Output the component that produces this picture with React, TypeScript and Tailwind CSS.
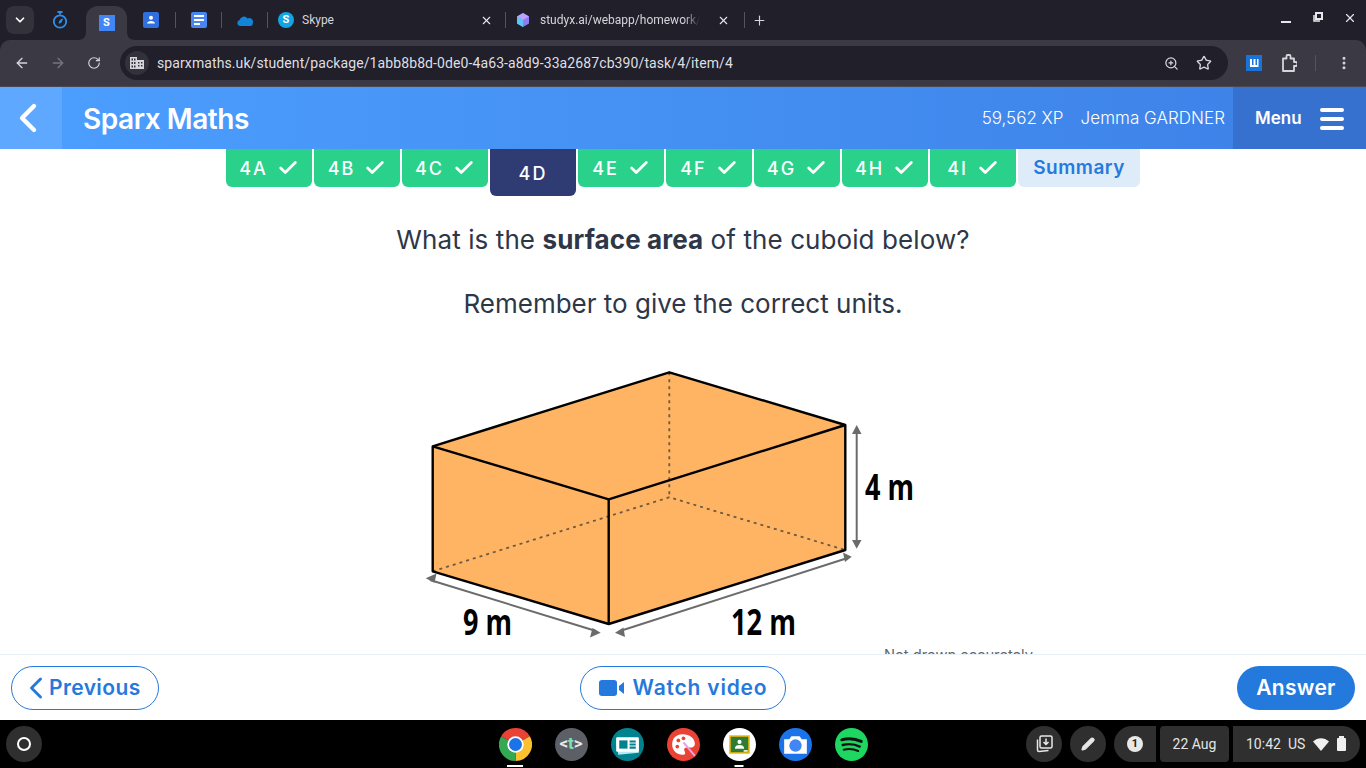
import { Check, ChevronDown, ChevronLeft, Plus, X, ArrowLeft, ArrowRight, RotateCw, Star, ZoomIn, EllipsisVertical, Pen } from "lucide-react"

const tabs = ["4A", "4B", "4C", "4D", "4E", "4F", "4G", "4H", "4I"]

function Sep() {
  return <div className="w-px h-[16px] bg-[#55545e]" />
}

function Favicon({ children, className }: { children: React.ReactNode; className: string }) {
  return <div className={`w-4 h-4 flex items-center justify-center text-white font-bold text-[11px] ${className}`}>{children}</div>
}

function BrowserChrome() {
  return (
    <div className="bg-[#201f2a] h-[87px] font-['Roboto',sans-serif]">
      <div className="h-[40px] flex items-start pt-[6px] text-[#d6d5db] relative">
        <div className="ml-[6px] w-[28px] h-[28px] bg-[#33323c] rounded-lg flex items-center justify-center">
          <ChevronDown size={14} strokeWidth={3} className="text-white" />
        </div>
        <div className="w-[52px] h-[28px] flex items-center justify-center">
          <svg width="16" height="18" viewBox="0 0 16 18" fill="none" stroke="#2f8fe8" strokeWidth="1.8">
            <path d="M5.500 1h5M8 1v2.500" />
            <circle cx="8" cy="10.500" r="6.200" />
            <path d="M10.500 8l-1.500 3.500-2 .6 1-2.600z" fill="#2f8fe8" strokeWidth="1" />
          </svg>
        </div>
        <div className="relative w-[41px] h-[34px] bg-[#3b3a44] rounded-t-[12px] flex items-center justify-center">
          <svg className="absolute bottom-0 -right-[8px]" width="8" height="8" viewBox="0 0 8 8"><path d="M0 0C0 5 3 8 8 8H0Z" fill="#3b3a44" /></svg>
          <svg className="absolute bottom-0 -left-[8px]" width="8" height="8" viewBox="0 0 8 8"><path d="M8 0C8 5 5 8 0 8H8Z" fill="#3b3a44" /></svg>
          <Favicon className="bg-[#4285f4]">S</Favicon>
        </div>
        <div className="w-[48px] h-[28px] flex items-center justify-center">
          <Favicon className="bg-[#2f6fe0] rounded-[2px]">
            <svg width="12" height="12" viewBox="0 0 12 12" fill="#fff"><circle cx="6" cy="3.800" r="2" /><path d="M2 9.500c0-1.800 2-2.600 4-2.600s4 .8 4 2.600z" /></svg>
          </Favicon>
        </div>
        <div className="h-[28px] flex items-center"><Sep /></div>
        <div className="w-[45px] h-[28px] flex items-center justify-center">
          <div className="w-4 h-4 bg-[#4a86f0] rounded-[2px] flex flex-col justify-center gap-[2px] px-[3px]">
            <div className="h-[2px] w-full bg-white" />
            <div className="h-[2px] w-full bg-white" />
            <div className="h-[2px] w-[6px] bg-white" />
          </div>
        </div>
        <div className="h-[28px] flex items-center"><Sep /></div>
        <div className="w-[45px] h-[28px] flex items-center justify-center">
          <svg width="16" height="11" viewBox="0 0 16 11">
            <path d="M3 11a3 3 0 0 1-.4-5.900A4.400 4.400 0 0 1 10.500 3.400 3.800 3.800 0 0 1 15.800 8c.3 2-1 3-2.300 3z" fill="#1484d8" />
          </svg>
        </div>
        <div className="h-[28px] flex items-center"><Sep /></div>
        <div className="w-[237px] h-[28px] flex items-center pl-[10px]">
          <div className="w-4 h-4 rounded-full bg-[#12a5e6] text-white font-bold text-[11px] flex items-center justify-center">S</div>
          <span className="ml-2 text-[12px]">Skype</span>
          <X size={13} strokeWidth={2} className="ml-auto mr-[12px] text-[#e8e8ec]" />
        </div>
        <div className="h-[28px] flex items-center"><Sep /></div>
        <div className="w-[238px] h-[28px] flex items-center pl-[11px]">
          <svg width="12" height="14" viewBox="0 0 12 14">
            <path d="M6 0l6 3.500v7L6 14l-6-3.500v-7z" fill="#8f7bf5" />
            <path d="M6 0l6 3.500L6 7 0 3.500z" fill="#b9a3ff" />
            <path d="M6 7v7l-6-3.500v-7z" fill="#5cc6ee" />
          </svg>
          <span className="ml-[11px] text-[12px] w-[160px] overflow-hidden whitespace-nowrap [mask-image:linear-gradient(90deg,#000_90%,transparent)]">studyx.ai/webapp/homework/</span>
          <X size={13} strokeWidth={2} className="ml-[17px] text-[#e8e8ec]" />
        </div>
        <div className="h-[28px] flex items-center"><Sep /></div>
        <div className="h-[28px] w-[28px] flex items-center justify-center">
          <Plus size={15} strokeWidth={1.8} />
        </div>
        <div className="ml-auto h-[28px] flex items-center text-white">
          <div className="w-[10px] h-[2px] bg-[#e8e8ec] mt-[4px]" />
          <svg className="ml-[22px] mb-[6px]" width="10" height="10" viewBox="0 0 10 10" fill="none" stroke="#e8e8ec" strokeWidth="1.500">
            <rect x="3" y="1" width="6" height="6" strokeWidth="2" />
            <path d="M1 3v6h6" />
          </svg>
          <X size={14} strokeWidth={2} className="ml-[20px] mr-[9px] mb-[4px] text-[#e8e8ec]" />
        </div>
      </div>
      <div className="h-[47px] bg-[#3b3a44] rounded-tl-[10px] rounded-tr-[10px] flex items-center text-[#d6d5db] border-b border-[#4a4952]">
        <ArrowLeft size={16} strokeWidth={2} className="ml-[14px]" />
        <ArrowRight size={16} strokeWidth={2} className="ml-[20px] text-[#76757e]" />
        <RotateCw size={14} strokeWidth={2} className="ml-[21px]" />
        <div className="ml-[19px] w-[1108px] h-[34px] bg-[#201f2a] rounded-full flex items-center pl-[5px] pr-[16px]">
          <div className="w-6 h-6 rounded-full bg-[#33323c] flex items-center justify-center">
            <svg width="14" height="12" viewBox="0 0 14 12" fill="#d6d5db">
              <path d="M0 0h7v3h7v9H0zM1.500 1.500v2h1.500v-2zM4 1.500v2h1.500v-2zM1.500 5v2h1.500V5zM4 5v2h1.500V5zM1.500 8.500v2h1.500v-2zM4 8.500v2h1.500v-2zM8 5v1.500h1.500V5zM11 5v1.500h1.500V5zM8 8v1.500h1.500V8zM11 8v1.500h1.500V8z" fillRule="evenodd" />
            </svg>
          </div>
          <span className="ml-[8px] text-[14px] text-[#dfdee3] whitespace-nowrap tracking-[0.1px]">sparxmaths.uk/student/package/1abb8b8d-0de0-4a63-a8d9-33a2687cb390/task/4/item/4</span>
          <ZoomIn size={15} strokeWidth={2} className="ml-auto" />
          <Star size={16} strokeWidth={2} className="ml-[17px]" />
        </div>
        <div className="ml-[18px] w-4 h-4 bg-[#1a73d8] flex items-center justify-center">
          <svg width="10" height="10" viewBox="0 0 10 10" fill="#fff">
            <path d="M1 1h2v6h1.500V1h2v6H8V1h1.500v8H1z" />
          </svg>
        </div>
        <svg className="ml-[19px]" width="16" height="18" viewBox="0 0 16 18" fill="none" stroke="#d6d5db" strokeWidth="1.800" strokeLinejoin="round">
          <path d="M2 4.500h3.500V2a1 1 0 0 1 1-1h2a1 1 0 0 1 1 1v2.500H13V8h1.500a1 1 0 0 1 0 4H13v5H2z" />
        </svg>
        <div className="ml-[18px] w-px h-[16px] bg-[#55545e]" />
        <EllipsisVertical size={16} strokeWidth={2.5} className="ml-[20px]" />
      </div>
    </div>
  )
}

function Header() {
  return (
    <div className="h-[62px] flex items-stretch bg-gradient-to-r from-[#4c9fff] to-[#3d80e6] text-white font-['Inter',sans-serif]">
      <div className="w-[62px] bg-[#5ea9ff] flex items-center justify-center">
        <ChevronLeft size={48} strokeWidth={2.2} className="mr-[6px]" />
      </div>
      <div className="ml-[21px] self-center text-[28px] font-semibold tracking-[-0.45px] mt-[1px]">Sparx Maths</div>
      <div className="ml-auto self-center text-[17px] font-light mt-[2px] mr-[1px]">59,562 XP</div>
      <div className="ml-[16px] mr-[8px] self-center text-[17px] font-light mt-[2px] tracking-[0.05px]">Jemma GARDNER</div>
      <div className="w-[133px] bg-[#3671cf] flex items-center pl-[22px]">
        <span className="text-[17px] font-semibold mt-[2px]">Menu</span>
        <div className="ml-[18px] w-[24px] flex flex-col gap-[5px] mt-[1px]">
          <div className="h-[4px] rounded-full bg-white" />
          <div className="h-[4px] rounded-full bg-white" />
          <div className="h-[4px] rounded-full bg-white" />
        </div>
      </div>
    </div>
  )
}

function TaskTabs() {
  return (
    <div className="h-[47px] flex justify-center items-start gap-[2px] font-['Inter',sans-serif]">
      {tabs.map((tab) =>
        tab === "4D" ? (
          <div key={tab} className="w-[86px] h-[47px] bg-[#2f3c73] rounded-b-md flex items-center justify-center text-white font-medium text-[18px] tracking-[2px] pt-[1px]">
            {tab}
          </div>
        ) : (
          <div key={tab} className="w-[86px] h-[38px] bg-[#2ad18b] rounded-b-md flex items-center justify-center gap-[9px] text-white font-medium text-[18px] tracking-[2px]">
            <span>{tab}</span>
            <Check size={22} strokeWidth={3} />
          </div>
        )
      )}
      <div className="w-[122px] h-[38px] bg-[#deebf8] rounded-b-md flex items-center justify-center text-[#2679dc] font-semibold text-[19px] tracking-[0.5px]">
        Summary
      </div>
    </div>
  )
}

function Cuboid() {
  const label = "'Open Sans', sans-serif"
  return (
    <svg className="mt-[45px] mx-auto block w-[700px] h-[278px] overflow-visible" viewBox="333 365 700 278">
      <path d="M432.700 446.300L669.300 372.300L845.300 425L845.300 550L608.700 624L432.700 571.300Z" fill="#ffb463" />
      <g stroke="#6e5a42" strokeWidth="1.800" strokeDasharray="3 4" fill="none">
        <path d="M669.300 372.300V497.300" />
        <path d="M432.700 571.300L669.300 497.300L845.300 550" />
      </g>
      <g stroke="#000" strokeWidth="2.400" fill="none" strokeLinejoin="round">
        <path d="M432.700 446.300L669.300 372.300L845.300 425L845.300 550L608.700 624L432.700 571.300Z" />
        <path d="M432.700 446.300L608.700 499.300L845.300 425" />
        <path d="M608.700 499.300V624" />
      </g>
      <g stroke="#6b6b6b" strokeWidth="2" fill="#6b6b6b">
        <path d="M430 580L596 631" />
        <path d="M620 631L846 558.500" />
        <path d="M856.700 432V542" />
      </g>
      <g fill="#6b6b6b">
        <path d="M425.700 578.300L436.500 573.500L434.500 582.800Z" />
        <path d="M600.700 632.700L590 637.500L592.500 628Z" />
        <path d="M615 632.700L623.500 627.500L625 637Z" />
        <path d="M851.700 556.700L843 552.500L845 562Z" />
        <path d="M856.700 425L852 434H861.500Z" />
        <path d="M856.700 548.700L852 540H861.500Z" />
      </g>
      <g fontFamily={label} fontWeight="700" fontSize="36" fill="#000">
        <text x="463" y="635" textLength="49" lengthAdjust="spacingAndGlyphs">9 m</text>
        <text x="731" y="635" textLength="65" lengthAdjust="spacingAndGlyphs">12 m</text>
        <text x="865" y="500" textLength="49" lengthAdjust="spacingAndGlyphs">4 m</text>
      </g>
    </svg>
  )
}

function Content() {
  return (
    <div className="h-[505px] overflow-hidden bg-white font-['Inter',sans-serif]">
      <TaskTabs />
      <p className="mt-[28px] text-center text-[26px] leading-[32px] text-[#2d3748] tracking-[0.09px]">
        What is the <span className="font-bold">surface area</span> of the cuboid below?
      </p>
      <p className="mt-[32px] text-center text-[26px] leading-[32px] text-[#2d3748]">Remember to give the correct units.</p>
      <Cuboid />
      <div className="w-[700px] mx-auto text-right text-[14.7px] leading-[24px] text-[#666]">Not drawn accurately</div>
    </div>
  )
}

function Footer() {
  return (
    <div className="h-[66px] bg-white border-t border-[#e8f0f8] grid grid-cols-[1fr_auto_1fr] items-center px-[11px] font-['Inter',sans-serif] text-[21px] font-semibold text-[#2679dc]">
      <div className="w-[148px] h-[44px] border border-[#2679dc] rounded-full flex items-center pl-[6px] tracking-[0.4px]">
        <ChevronLeft size={36} strokeWidth={1.9} />
        <span className="-ml-[5px]">Previous</span>
      </div>
      <div className="w-[206px] h-[44px] border border-[#2679dc] rounded-full flex items-center justify-center gap-[8px] tracking-[0.8px]">
        <svg width="26" height="16" viewBox="0 0 26 16" fill="#2679dc">
          <rect width="18" height="16" rx="3" />
          <path d="M20 6l5-4v12l-5-4z" />
        </svg>
        <span>Watch video</span>
      </div>
      <div className="justify-self-end w-[118px] h-[44px] bg-[#2479dd] rounded-full flex items-center justify-center text-white tracking-[0.3px]">Answer</div>
    </div>
  )
}

function ShelfApp({ children, running }: { children: React.ReactNode; running?: "long" | "short" }) {
  return (
    <div className="relative w-[33px] h-[33px]">
      {children}
      {running && <div className={`absolute top-[37px] left-1/2 -translate-x-1/2 h-[2px] bg-white ${running === "long" ? "w-[16px]" : "w-[9px]"}`} />}
    </div>
  )
}

function Shelf() {
  return (
    <div className="h-[48px] bg-black grid grid-cols-[1fr_auto_1fr] items-center px-[6px] font-['Roboto',sans-serif] text-[14px] text-[#e4e4e4]">
      <div>
        <div className="w-[36px] h-[36px] rounded-full bg-[#2f2f2f] flex items-center justify-center">
          <div className="w-[14px] h-[14px] rounded-full border-2 border-white" />
        </div>
      </div>
      <div className="flex gap-[23px]">
        <ShelfApp running="long">
          <svg viewBox="0 0 32 32" className="w-full h-full">
            <path d="M16 16L2.140 8A16 16 0 0 1 29.860 8Z" fill="#ea4335" />
            <path d="M16 16L29.860 8A16 16 0 0 1 16 32Z" fill="#fbc02d" />
            <path d="M16 16L16 32A16 16 0 0 1 2.140 8Z" fill="#34a853" />
            <circle cx="16" cy="16" r="8" fill="#fff" />
            <circle cx="16" cy="16" r="6.300" fill="#1a73e8" />
          </svg>
        </ShelfApp>
        <ShelfApp>
          <div className="w-full h-full rounded-full bg-[#5c5f66] flex items-center justify-center font-bold text-[17px] text-[#e8e8e8]">
            &lt;<span className="text-[#7fe0b0]">t</span>&gt;
          </div>
        </ShelfApp>
        <ShelfApp>
          <svg viewBox="0 0 32 32" className="w-full h-full">
            <circle cx="16" cy="16" r="16" fill="#00838f" />
            <path d="M5 12h22v12l-20 2z" fill="#b2ebf2" />
            <rect x="5" y="9" width="22" height="14" rx="1" fill="#fff" />
            <rect x="8" y="12" width="8" height="8" fill="#00838f" />
            <path d="M18 12h6v2h-6zM18 15h6v2h-6zM18 18h6v2h-6z" fill="#00838f" />
          </svg>
        </ShelfApp>
        <ShelfApp>
          <svg viewBox="0 0 32 32" className="w-full h-full">
            <circle cx="16" cy="16" r="16" fill="#ea4335" />
            <path d="M15 6c-6 0-10 4-10 10s5 10 10 10c3 0 3-2 2-3.500-1-2 0-3.500 2.500-3.500H23c3 0 4-2 4-4 0-5-5-9-12-9z" fill="#fff" />
            <circle cx="11" cy="12" r="1.800" fill="#ea4335" />
            <circle cx="16" cy="10" r="1.800" fill="#ea4335" />
            <circle cx="10" cy="18" r="1.800" fill="#ea4335" />
            <path d="M16 14l11 13" stroke="#e6a0e6" strokeWidth="2" />
          </svg>
        </ShelfApp>
        <ShelfApp running="short">
          <svg viewBox="0 0 32 32" className="w-full h-full">
            <circle cx="16" cy="16" r="16" fill="#fff" />
            <rect x="6" y="7" width="20" height="18" fill="#fbbc04" />
            <rect x="7.500" y="8.500" width="17" height="15" fill="#2e7d32" />
            <circle cx="16" cy="13.500" r="2" fill="#fff" />
            <path d="M11.500 20c0-2.500 2-3.500 4.500-3.500s4.500 1 4.500 3.500z" fill="#fff" />
            <rect x="20" y="21.500" width="4" height="1.500" fill="#fff" />
          </svg>
        </ShelfApp>
        <ShelfApp>
          <svg viewBox="0 0 32 32" className="w-full h-full">
            <circle cx="16" cy="16" r="16" fill="#1a73e8" />
            <path d="M5 11h5l2-3h8l2 3h5v14H5z" fill="#fff" />
            <circle cx="16" cy="17" r="6" fill="#4285f4" />
          </svg>
        </ShelfApp>
        <ShelfApp>
          <svg viewBox="0 0 32 32" className="w-full h-full">
            <circle cx="16" cy="16" r="16" fill="#1ed760" />
            <g fill="none" stroke="#111" strokeLinecap="round">
              <path d="M6.500 11.500c6-1.800 13-1.300 19 1.500" strokeWidth="2.800" />
              <path d="M7.500 16.500c5.500-1.400 11.500-1 16.500 1.500" strokeWidth="2.400" />
              <path d="M8.500 21c4.500-1.100 9.500-.8 14 1.300" strokeWidth="2" />
            </g>
          </svg>
        </ShelfApp>
      </div>
      <div className="flex items-center justify-end gap-[4px]">
        <div className="w-[36px] h-[36px] rounded-full bg-[#2f2f2f] flex items-center justify-center">
          <svg width="18" height="18" viewBox="0 0 18 18" fill="none" stroke="#e8e8e8" strokeWidth="1.500">
            <rect x="5" y="1" width="12" height="12" rx="1.500" />
            <path d="M2.500 4.500v10.500a1.500 1.500 0 0 0 1.500 1.500l9.500-1" />
            <path d="M11 3.500v6M8.500 7l2.500 2.500L13.500 7" />
          </svg>
        </div>
        <div className="ml-[4px] w-[36px] h-[36px] rounded-full bg-[#2f2f2f] flex items-center justify-center">
          <Pen size={14} strokeWidth={2.500} fill="#e8e8e8" />
        </div>
        <div className="ml-[4px] w-[42px] h-[36px] rounded-l-full rounded-r-[4px] bg-[#2f2f2f] flex items-center justify-center">
          <div className="w-4 h-4 rounded-full bg-[#e8e8e8] text-[#222] text-[11px] font-bold flex items-center justify-center">1</div>
        </div>
        <div className="w-[69px] h-[36px] rounded-[4px] bg-[#2f2f2f] flex items-center justify-center">22 Aug</div>
        <div className="w-[127px] h-[36px] rounded-l-[4px] rounded-r-full bg-[#2f2f2f] flex items-center pl-[13px]">
          <span>10:42</span>
          <span className="ml-[7px]">US</span>
          <svg className="ml-[8px]" width="16" height="13" viewBox="0 0 16 13" fill="#f0f0f0"><path d="M0 3.500C4.500-1 11.500-1 16 3.500L8 13z" /></svg>
          <div className="ml-[8px] w-[9px] h-[13px] bg-[#f0f0f0] rounded-[1px] relative">
            <div className="absolute -top-[2px] left-[2px] w-[5px] h-[2px] bg-[#f0f0f0]" />
          </div>
        </div>
      </div>
    </div>
  )
}

export default function App() {
  return (
    <div className="w-[1366px] h-[768px] overflow-hidden">
      <BrowserChrome />
      <Header />
      <Content />
      <Footer />
      <Shelf />
    </div>
  )
}
